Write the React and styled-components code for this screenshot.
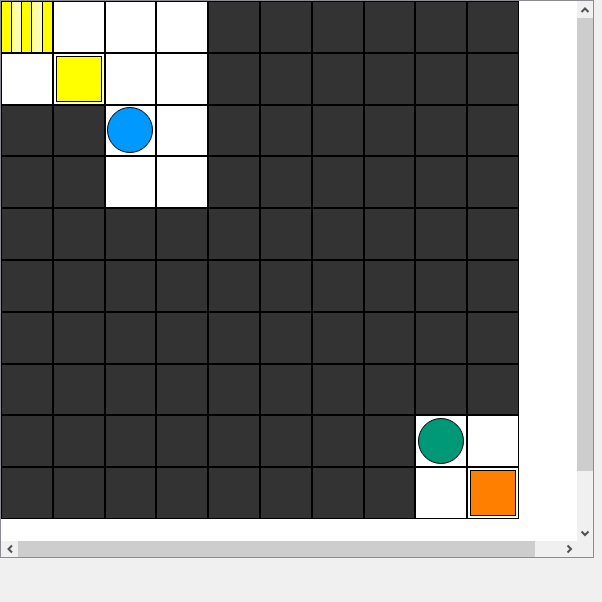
import React from "react";
import styled, { createGlobalStyle } from "styled-components";

const Global = createGlobalStyle`
  html, body { margin: 0; padding: 0; background: #f0f0f0; font-family: "Liberation Sans", Arial, sans-serif; }
`;

const Viewport = styled.div`
  box-sizing: border-box;
  width: 594px;
  height: 558px;
  border: 1px solid #8a8c92;
  background: #ffffff;
  display: grid;
  grid-template-columns: 1fr 16px;
  grid-template-rows: 1fr 16px;
`;

const Pane = styled.div`
  overflow: hidden;
  background: #ffffff;
  min-width: 0;
  min-height: 0;
`;

const Board = styled.div`
  box-sizing: border-box;
  width: 518px;
  height: 518px;
  padding: 1px;
  background: #000;
  display: grid;
  grid-template-columns: repeat(10, 1fr);
  grid-template-rows: repeat(10, 1fr);
  gap: 2px;
`;

const Cell = styled.div`
  background: ${(p) => (p.$dark ? "#333333" : "#ffffff")};
  display: flex;
  align-items: center;
  justify-content: center;
  min-width: 0;
  min-height: 0;
`;

const Stripes = styled.div`
  display: flex;
  width: 100%;
  height: 100%;
  gap: 1px;
  background: #000;
`;

const Stripe = styled.div`
  flex: 1;
  background: ${(p) => (p.$light ? "#ffffaa" : "#ffff00")};
`;

const Block = styled.div`
  box-sizing: border-box;
  width: 46px;
  height: 46px;
  border: 1px solid #000;
  background: ${(p) => p.$color};
`;

const Disc = styled.div`
  box-sizing: border-box;
  width: 46px;
  height: 46px;
  border-radius: 50%;
  border: 1px solid #000;
  background: ${(p) => p.$color};
`;

const ScrollBar = styled.div`
  background: #f0f0f0;
  display: flex;
  flex-direction: ${(p) => (p.$vertical ? "column" : "row")};
  min-width: 0;
  min-height: 0;
`;

const ArrowButton = styled.div`
  flex: 0 0 17px;
  display: flex;
  align-items: center;
  justify-content: center;
  ${(p) => (p.$vertical ? "height: 17px;" : "width: 17px;")}
`;

const Thumb = styled.div`
  background: #cdcdcd;
  flex: 0 0 ${(p) => p.$size}px;
`;

const Spacer = styled.div`
  flex: 1;
`;

const Corner = styled.div`
  background: #f0f0f0;
`;

const chevrons = {
  up: "4.5,10 8,6.5 11.5,10",
  down: "4.5,6.5 8,10 11.5,6.5",
  left: "10,4.5 6.5,8 10,11.5",
  right: "6.5,4.5 10,8 6.5,11.5",
};

function Chevron({ dir }) {
  return (
    <svg width="16" height="16" viewBox="0 0 16 16">
      <polyline
        points={chevrons[dir]}
        fill="none"
        stroke="#505050"
        strokeWidth="2"
        strokeLinejoin="miter"
      />
    </svg>
  );
}

const layout = [
  "SWWWDDDDDD",
  "WYWWDDDDDD",
  "DDBWDDDDDD",
  "DDWWDDDDDD",
  "DDDDDDDDDD",
  "DDDDDDDDDD",
  "DDDDDDDDDD",
  "DDDDDDDDDD",
  "DDDDDDDDTW",
  "DDDDDDDDWO",
];

function renderCell(code, key) {
  switch (code) {
    case "D":
      return <Cell key={key} $dark />;
    case "S":
      return (
        <Cell key={key}>
          <Stripes>
            {[false, true, false, true, false].map((l, i) => (
              <Stripe key={i} $light={l} />
            ))}
          </Stripes>
        </Cell>
      );
    case "Y":
      return (
        <Cell key={key}>
          <Block $color="#ffff00" />
        </Cell>
      );
    case "O":
      return (
        <Cell key={key}>
          <Block $color="#ff8000" />
        </Cell>
      );
    case "B":
      return (
        <Cell key={key}>
          <Disc $color="#0099ff" />
        </Cell>
      );
    case "T":
      return (
        <Cell key={key}>
          <Disc $color="#009977" />
        </Cell>
      );
    default:
      return <Cell key={key} />;
  }
}

export default function App() {
  return (
    <>
      <Global />
      <Viewport>
        <Pane>
          <Board>
            {layout.flatMap((row, r) =>
              row.split("").map((c, i) => renderCell(c, `${r}-${i}`))
            )}
          </Board>
        </Pane>
        <ScrollBar $vertical>
          <ArrowButton $vertical>
            <Chevron dir="up" />
          </ArrowButton>
          <Thumb $size={453} />
          <Spacer />
          <ArrowButton $vertical>
            <Chevron dir="down" />
          </ArrowButton>
        </ScrollBar>
        <ScrollBar>
          <ArrowButton>
            <Chevron dir="left" />
          </ArrowButton>
          <Thumb $size={517} />
          <Spacer />
          <ArrowButton>
            <Chevron dir="right" />
          </ArrowButton>
        </ScrollBar>
        <Corner />
      </Viewport>
    </>
  );
}
